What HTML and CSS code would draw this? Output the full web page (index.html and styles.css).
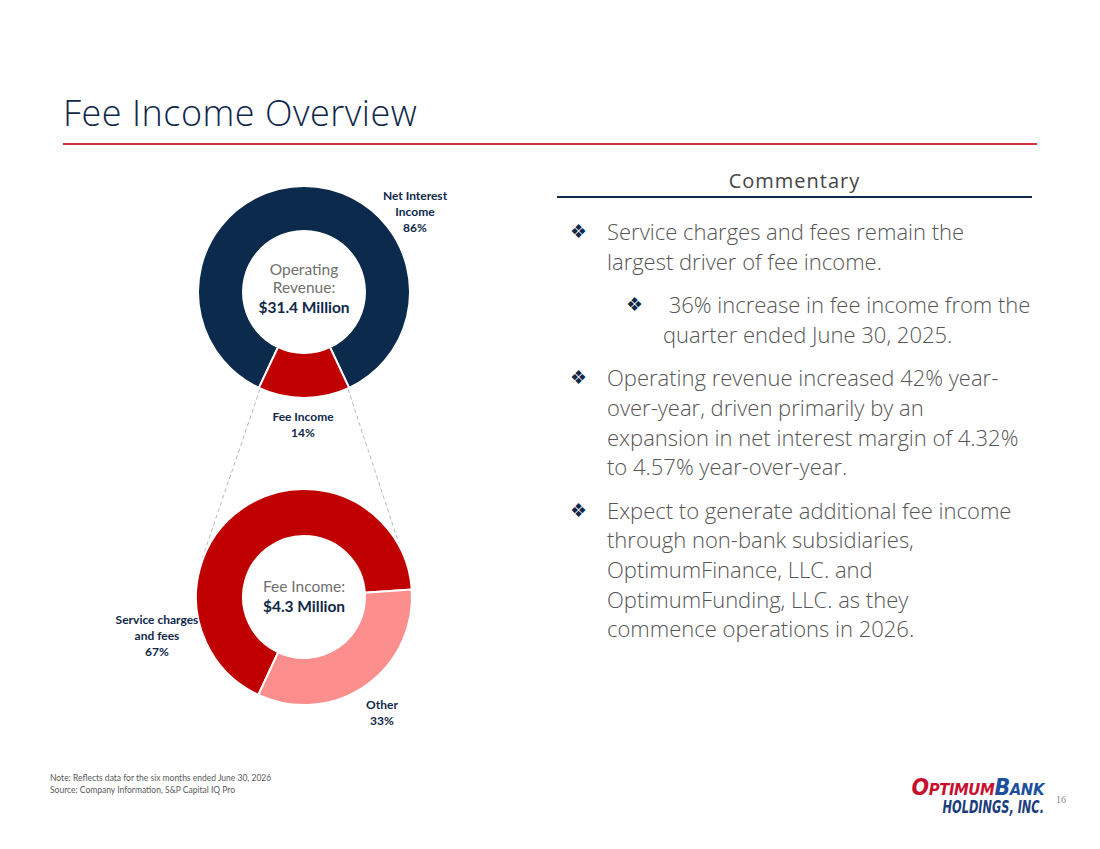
FILE: index.html
```html
<!DOCTYPE html>
<html lang="en">
<head>
<meta charset="utf-8">
<title>Fee Income Overview</title>
<link rel="stylesheet" href="styles.css">
</head>
<body>
<div class="slide">
  <header class="header">
    <h1 class="title">Fee Income Overview</h1>
  </header>

  <main class="main">
    <div class="chart">
      <svg class="chart-svg" width="370" height="600" viewBox="0 0 370 600">
        <!-- connector lines -->
        <line class="connector" x1="160" y1="220" x2="102" y2="390"/>
        <line class="connector" x1="248" y1="220" x2="304" y2="390"/>

        <!-- top donut: operating revenue -->
        <path class="seg seg-navy" d="M158.87 218.91 A106 106 0 1 1 249.13 218.91 L229.97 178.19 A61 61 0 1 0 178.03 178.19 Z"/>
        <path class="seg seg-red" d="M249.13 218.91 A106 106 0 0 1 158.87 218.91 L178.03 178.19 A61 61 0 0 0 229.97 178.19 Z"/>

        <text class="center-light" x="204" y="106">Operating</text>
        <text class="center-light" x="204" y="124">Revenue:</text>
        <text class="center-bold" x="204" y="144">$31.4 Million</text>

        <text class="lbl" x="315" y="31">Net Interest</text>
        <text class="lbl" x="315" y="47">Income</text>
        <text class="lbl" x="315" y="63">86%</text>

        <text class="lbl" x="203" y="252">Fee Income</text>
        <text class="lbl" x="203" y="268">14%</text>

        <!-- bottom donut: fee income -->
        <path class="seg seg-red" d="M158.36 525.88 A108 108 0 1 1 311.74 420.46 L264.85 423.74 A61 61 0 1 0 178.22 483.28 Z"/>
        <path class="seg seg-pink" d="M311.74 420.46 A108 108 0 0 1 158.36 525.88 L178.22 483.28 A61 61 0 0 0 264.85 423.74 Z"/>

        <text class="center-light" x="204" y="423">Fee Income:</text>
        <text class="center-bold" x="204" y="443">$4.3 Million</text>

        <text class="lbl" x="57" y="455">Service charges</text>
        <text class="lbl" x="57" y="471">and fees</text>
        <text class="lbl" x="57" y="487">67%</text>

        <text class="lbl" x="282" y="540">Other</text>
        <text class="lbl" x="282" y="556">33%</text>
      </svg>
    </div>

    <section class="commentary">
      <h2 class="comm-title">Commentary</h2>
      <ul class="bullets">
        <li class="item">
          <span class="mark">&#10070;</span>
          <span class="txt">Service charges and fees remain the largest driver of fee income.</span>
        </li>
        <li class="item item-sub">
          <span class="mark">&#10070;</span>
          <span class="txt">&nbsp;36% increase in fee income from the quarter ended June 30, 2025.</span>
        </li>
        <li class="item">
          <span class="mark">&#10070;</span>
          <span class="txt">Operating revenue increased 42% year-over-year, driven primarily by an<br>expansion in net interest margin of 4.32% to 4.57% year-over-year.</span>
        </li>
        <li class="item">
          <span class="mark">&#10070;</span>
          <span class="txt">Expect to generate additional fee income through non-bank subsidiaries, OptimumFinance, LLC. and OptimumFunding, LLC. as they<br>commence operations in 2026.</span>
        </li>
      </ul>
    </section>
  </main>

  <footer class="footer">
    <div class="notes">
      <p>Note: Reflects data for the six months ended June 30, 2026</p>
      <p>Source: Company Information, S&amp;P Capital IQ Pro</p>
    </div>
    <div class="brand">
      <div class="logo">
        <div class="logo-top"><span class="red"><span class="big">O</span>PTIMUM</span><span class="blue"><span class="big">B</span>ANK</span></div>
        <div class="logo-bottom">HOLDINGS, INC.</div>
      </div>
      <span class="page-num">16</span>
    </div>
  </footer>
</div>
</body>
</html>
```

FILE: styles.css
```css
* { box-sizing: border-box; }

html, body {
  margin: 0;
  padding: 0;
  background: #ffffff;
}

body {
  font-family: "Open Sans", Lato, sans-serif;
  color: #555555;
}

.slide {
  width: 1100px;
  height: 849px;
  display: flex;
  flex-direction: column;
  overflow: hidden;
}

.header {
  padding: 88px 63px 0 63px;
}

.title {
  margin: 0;
  font-family: "Open Sans", Lato, sans-serif;
  font-size: 36px;
  font-weight: 300;
  letter-spacing: 0.5px;
  line-height: 49px;
  color: #10284a;
  padding-bottom: 6px;
  border-bottom: 2px solid #d5303e;
  width: 974px;
}

.main {
  display: flex;
  padding-left: 100px;
  margin-top: 24px;
  gap: 87px;
  height: 603px;
}

.chart {
  width: 370px;
  flex: none;
}

.chart-svg {
  display: block;
}

.connector {
  stroke: #b9b9b9;
  stroke-width: 1;
  stroke-dasharray: 4 3;
}

.seg {
  stroke: #ffffff;
  stroke-width: 2;
}

.seg-navy { fill: #0c2a4c; }
.seg-red { fill: #c00000; }
.seg-pink { fill: #fd8e8e; }

.lbl {
  font-family: Lato, sans-serif;
  font-size: 12px;
  font-weight: 700;
  fill: #10284a;
  text-anchor: middle;
}

.center-light {
  font-family: Lato, sans-serif;
  font-size: 15.5px;
  font-weight: 400;
  fill: #707070;
  text-anchor: middle;
}

.center-bold {
  font-family: Lato, sans-serif;
  font-size: 15.5px;
  font-weight: 700;
  fill: #10284a;
  text-anchor: middle;
}

.commentary {
  width: 475px;
  flex: none;
}

.comm-title {
  margin: 0;
  text-align: center;
  font-size: 20px;
  font-weight: 400;
  letter-spacing: 1px;
  line-height: 24px;
  color: #454545;
  padding-bottom: 3px;
  border-bottom: 2px solid #10284a;
}

.bullets {
  list-style: none;
  margin: 19px 0 0 0;
  padding: 0;
}

.item {
  display: flex;
  align-items: flex-start;
  font-size: 22px;
  font-weight: 300;
  line-height: 29.6px;
  color: #555555;
  margin-bottom: 14px;
}

.item-sub {
  padding-left: 56px;
}

.mark {
  flex: none;
  width: 50px;
  padding-left: 13px;
  font-family: "DejaVu Sans", sans-serif;
  font-size: 19px;
  color: #10284a;
}

.txt {
  flex: 1;
}

.footer {
  display: flex;
  justify-content: space-between;
  align-items: flex-start;
  padding: 0 34px 0 50px;
}

.notes p {
  margin: 0;
  font-family: Lato, sans-serif;
  font-size: 8.5px;
  line-height: 12px;
  color: #595959;
}

.brand {
  display: flex;
  align-items: center;
  gap: 12px;
  margin-top: 6px;
}

.logo {
  font-family: "DejaVu Sans Condensed", "DejaVu Sans", sans-serif;
  font-weight: 700;
  font-style: italic;
  text-align: right;
}

.logo-top {
  font-size: 16.5px;
  line-height: 19px;
  letter-spacing: -0.4px;
}

.logo-top .big {
  font-size: 23px;
}

.red { color: #c8102e; }
.blue { color: #1d4f9c; }

.logo-bottom {
  font-size: 17px;
  line-height: 16px;
  color: #1b3c7d;
  margin-top: 0;
  margin-left: 36px;
  transform: scaleX(0.74);
  transform-origin: right center;
  white-space: nowrap;
}

.page-num {
  font-family: "Liberation Serif", serif;
  font-size: 10px;
  color: #8a8a8a;
  margin-top: 6px;
}
```
